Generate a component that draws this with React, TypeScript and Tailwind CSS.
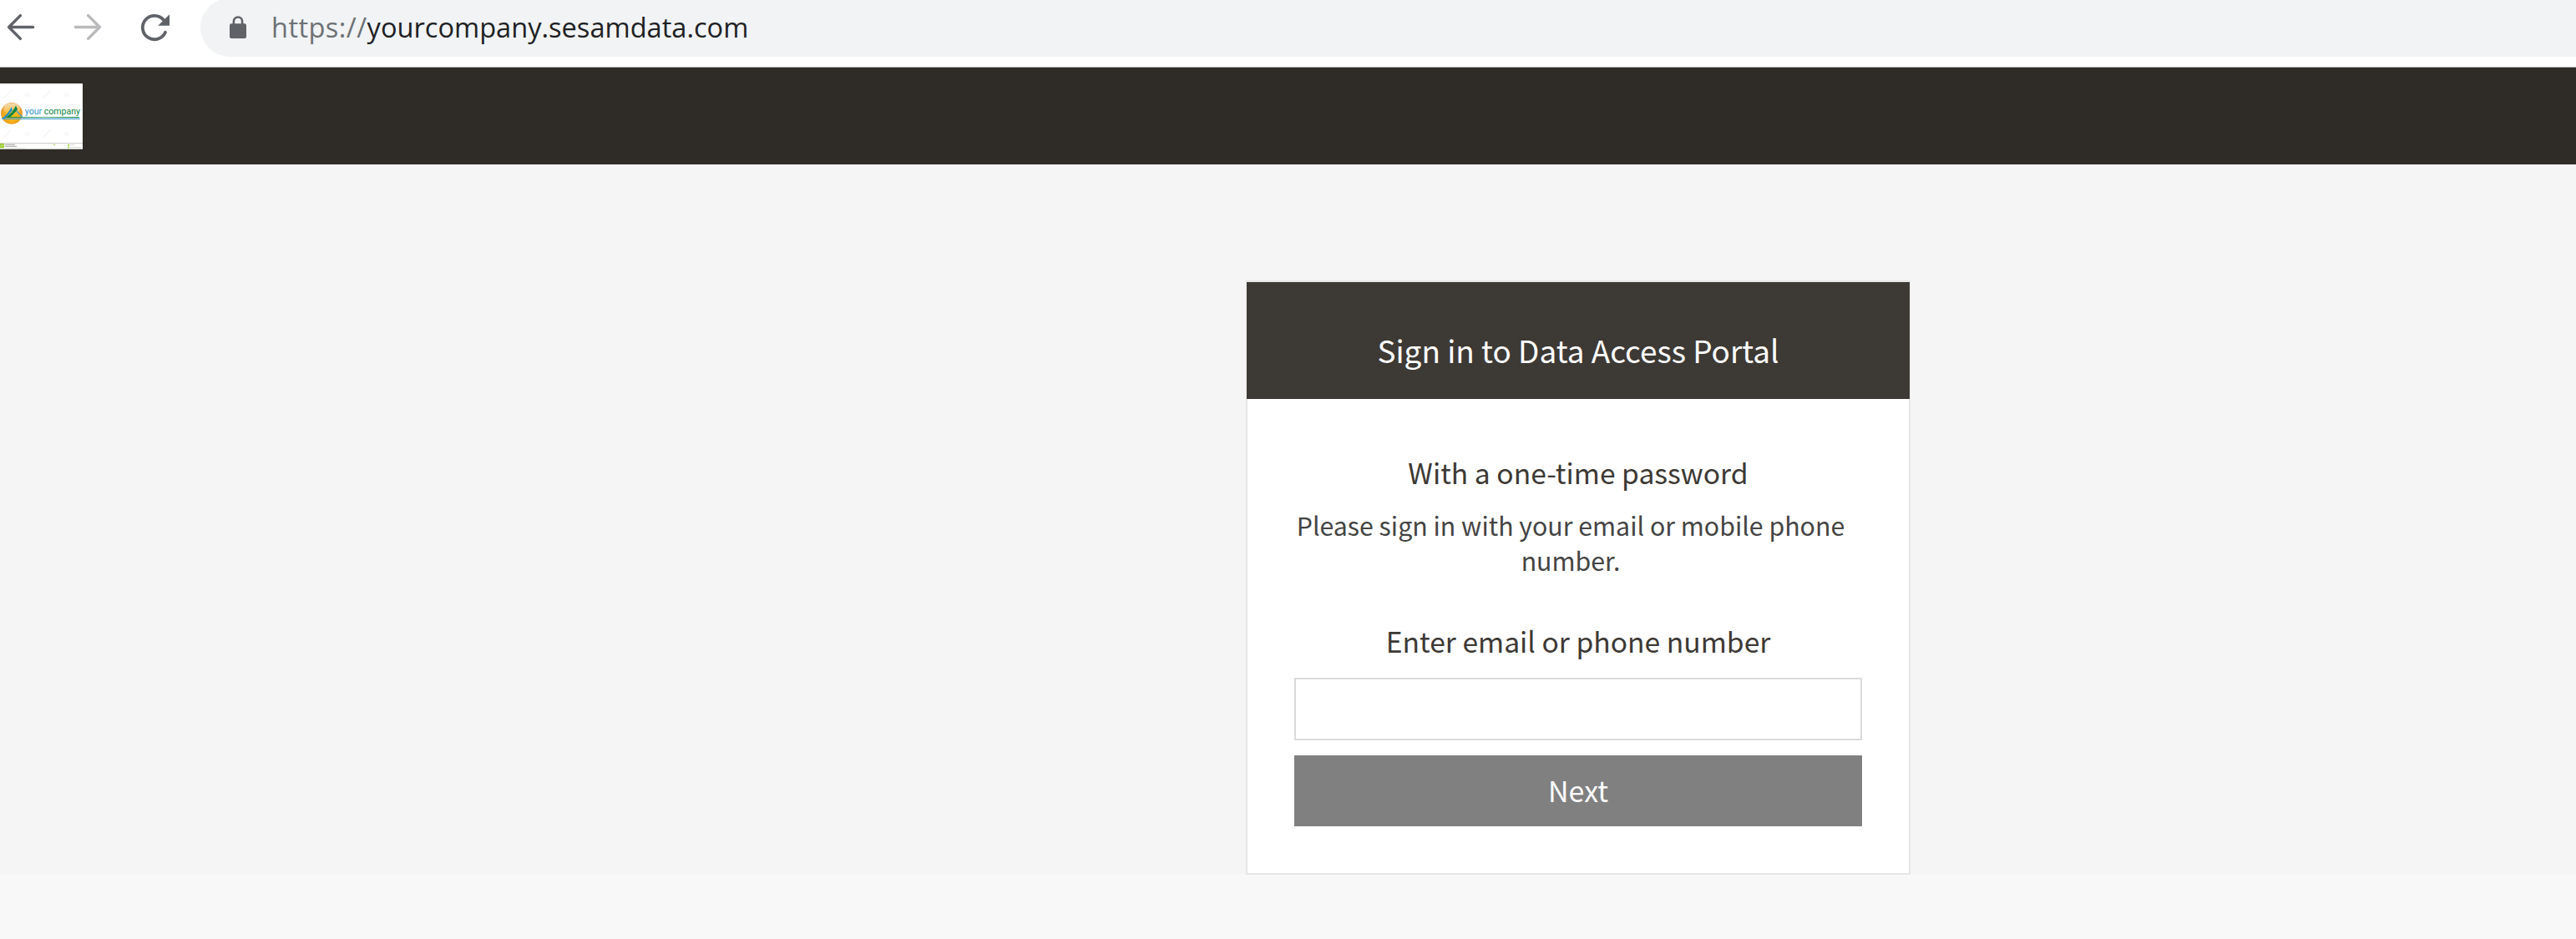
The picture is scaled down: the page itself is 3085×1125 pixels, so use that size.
import React from "react";

function BackIcon() {
  return (
    <svg className="h-[34px] w-[34px] shrink-0" viewBox="0 0 34 34" fill="none" stroke="#5f6368" strokeWidth="3.4" strokeLinecap="round" strokeLinejoin="round">
      <path d="M31.6 16.5H2.6M16.4 2.6L2.6 16.5L16.4 30.4" />
    </svg>
  );
}

function ForwardIcon() {
  return (
    <svg className="h-[34px] w-[34px] shrink-0" viewBox="0 0 34 34" fill="none" stroke="#bababc" strokeWidth="3.4" strokeLinecap="round" strokeLinejoin="round">
      <path d="M2.4 16.5H31.4M17.6 2.6L31.4 16.5L17.6 30.4" />
    </svg>
  );
}

function ReloadIcon() {
  return (
    <svg className="h-[36px] w-[36px] shrink-0" viewBox="0 0 36 36" fill="none">
      <path d="M30 22.8A14.2 14.2 0 1 1 28 8" stroke="#5f6368" strokeWidth="3.8" strokeLinecap="round" />
      <path d="M35 1.2V14.8H21.2Z" fill="#5f6368" />
    </svg>
  );
}

function LockIcon() {
  return (
    <svg className="h-[28px] w-[20px] shrink-0" viewBox="0 0 20 28" fill="none">
      <rect x="0" y="9.2" width="20" height="17.8" rx="2" fill="#5f6368" />
      <path d="M4.9 10V6.4A5.1 4.9 0 0 1 15.1 6.4V10" stroke="#5f6368" strokeWidth="2.6" />
    </svg>
  );
}

function Watermark({ x, y }: { x: number; y: number }) {
  return (
    <g>
      <path d={`M${x} ${y + 9.5}L${x + 9.5} ${y}`} stroke="#f7f7f7" strokeWidth="2" />
      <ellipse cx={x + 28.5} cy={y + 5} rx="3.2" ry="2.8" fill="#f9f9f9" />
    </g>
  );
}

function CompanyLogo() {
  return (
    <svg className="h-[79px] w-[99px] shrink-0" viewBox="0 0 99 79">
      <defs>
        <radialGradient id="sun" cx="0.5" cy="0.55" r="0.55">
          <stop offset="0" stopColor="#f8c417" />
          <stop offset="0.65" stopColor="#f5ac1c" />
          <stop offset="1" stopColor="#e08d22" />
        </radialGradient>
        <linearGradient id="shine" x1="0" y1="0" x2="0" y2="1">
          <stop offset="0" stopColor="#fff" stopOpacity="0.7" />
          <stop offset="1" stopColor="#fff" stopOpacity="0.05" />
        </linearGradient>
        <linearGradient id="greenLine" x1="0" y1="0" x2="1" y2="0">
          <stop offset="0" stopColor="#0d8543" />
          <stop offset="0.5" stopColor="#58b27c" />
          <stop offset="1" stopColor="#0d8543" />
        </linearGradient>
      </defs>
      <rect width="99" height="79" fill="#fff" />
      <Watermark x={4} y={8.5} />
      <Watermark x={51} y={8.5} />
      <Watermark x={4} y={55.5} />
      <Watermark x={51} y={55.5} />
      <circle cx="14" cy="35.8" r="12.9" fill="url(#sun)" />
      <ellipse cx="14" cy="30" rx="10.5" ry="6.6" fill="url(#shine)" />
      <path d="M2.5 41.5Q9 37.5 13.8 28L14.8 32Q11 38 5.5 42Z" fill="#258fc5" />
      <path d="M6.5 41Q14 37 19 26.5L21 31Q16 38 10.5 41Z" fill="#0b8544" />
      <path d="M19.5 32.5L26.5 40" stroke="#459eca" strokeWidth="1.2" />
      <path d="M11 40.5H95" stroke="url(#greenLine)" strokeWidth="1" />
      <rect x="11" y="40" width="84" height="1" fill="url(#greenLine)" />
      <path d="M2 42.3H95.7" stroke="#459fca" strokeWidth="1.2" />
      <text x="29.8" y="37" fontFamily="Roboto, sans-serif" fontSize="10.4" textLength="66.2" lengthAdjust="spacingAndGlyphs">
        <tspan fill="#2c91cb">your </tspan>
        <tspan fill="#0d8543">company</tspan>
      </text>
      <rect y="71.1" width="99" height="1" fill="#c9cbc8" />
      <rect y="72" width="5" height="5.4" fill="#a0cf3c" />
      <path d="M1.4 74.6H3.6" stroke="#d5eba5" />
      <path d="M5.8 73.3H18M5.8 75.3H20" stroke="#999" strokeWidth="0.9" />
      <path d="M5.8 77.2H30" stroke="#ddd" strokeWidth="0.7" />
      <path d="M62.5 72.5L65 73L66.5 72.4L65.5 74.3Z" fill="#a0cf3c" />
      <rect x="81" y="72.8" width="2.3" height="2" fill="#b2db5e" />
      <rect x="81" y="75.6" width="2.3" height="2" fill="#b2db5e" />
      <path d="M84 73.7H89M84 76.5H97" stroke="#cfcfcf" strokeWidth="0.9" />
      <rect y="78" width="99" height="1" fill="#bfc3bd" />
    </svg>
  );
}

function BrowserBar() {
  return (
    <div className="flex h-[81px] items-start overflow-hidden border-b border-[#a8a9aa] bg-white font-['Open_Sans',sans-serif]">
      <div className="flex w-[240px] shrink-0 pt-4 pl-2">
        <BackIcon />
        <div className="ml-[46px]"><ForwardIcon /></div>
        <div className="ml-[46px]"><ReloadIcon /></div>
      </div>
      <div className="-mt-0.5 flex h-[70px] grow items-center rounded-l-full bg-[#f1f3f4] pl-[35px]">
        <LockIcon />
        <div className="ml-[30px] text-[32.6px] leading-[48px] whitespace-nowrap text-[#202124]">
          <span className="tracking-[0.43px] text-[#6d7175]">https://</span>
          <span>yourcompany.sesamdata.com</span>
        </div>
      </div>
    </div>
  );
}

function SignInCard() {
  return (
    <div className="ml-[1492px] w-[796px] border-2 border-[#e6e6e6] bg-white text-center text-[#3d3935]">
      <h1 className="-mx-px h-[140px] bg-[#3d3935] pt-[54px] text-[36.9px] leading-[54px] text-white">
        Sign in to Data Access Portal
      </h1>
      <div className="px-14 pt-16 pb-14">
        <h2 className="text-[33.65px] leading-[48px]">With a one-time password</h2>
        <p className="mt-[18px] pr-[18px] text-[30.3px] leading-[42px] text-[#444444]">
          Please sign in with your email or mobile phone
          <br />
          number.
        </p>
        <label htmlFor="contact" className="mt-[52px] block text-[33.65px] leading-[48px]">
          Enter email or phone number
        </label>
        <input id="contact" type="text" className="mt-5 block h-[75px] w-full border-2 border-[#dadada] bg-white px-4 text-3xl outline-none" />
        <button type="button" className="mt-[18px] block h-[85px] w-full bg-[#808080] pb-0.5 text-[34px] leading-[48px] text-white">
          Next
        </button>
      </div>
    </div>
  );
}

export default function App() {
  return (
    <div className="h-[1125px] w-[3085px] overflow-hidden bg-[#f8f8f8] font-['Noto_Sans_CJK_SC',sans-serif]">
      <BrowserBar />
      <header className="flex h-[116px] items-start bg-[#2f2c27] pt-[19px]">
        <CompanyLogo />
      </header>
      <main className="bg-[#f5f5f5] pt-[139px]">
        <SignInCard />
      </main>
    </div>
  );
}
